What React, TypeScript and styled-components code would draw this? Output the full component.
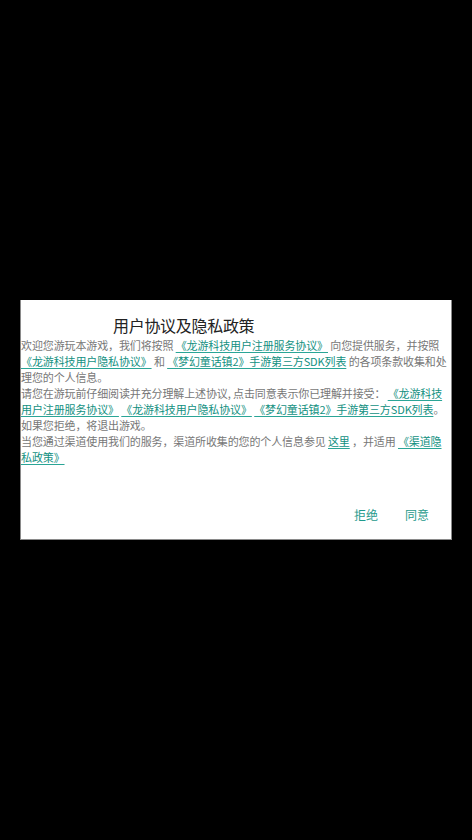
import React from "react";
import styled, { createGlobalStyle } from "styled-components";

const Global = createGlobalStyle`
  html, body { margin: 0; padding: 0; background: #000; }
  body { font-family: "Noto Sans CJK SC", "Noto Sans", sans-serif; }
  * { box-sizing: border-box; }
`;

const Screen = styled.div`
  width: 100vw;
  height: 100vh;
  background: #000;
  display: flex;
  align-items: center;
  justify-content: center;
`;

const Dialog = styled.div`
  width: 432px;
  height: 240px;
  background: #fff;
  border-left: 1px solid #8a8a8a;
  border-right: 1px solid #8a8a8a;
  border-bottom: 1px solid #8a8a8a;
  display: flex;
  flex-direction: column;
`;

const Title = styled.h1`
  margin: 13px 0 0 92px;
  font-size: 16px;
  line-height: 24px;
  font-weight: 400;
  letter-spacing: -0.3px;
  color: #222;
`;

const Body = styled.div`
  flex: 1;
  font-size: 11px;
  line-height: 16px;
  letter-spacing: -0.12px;
  color: #777;
`;

const Para = styled.p`
  margin: 0;
`;

const Link = styled.span`
  color: #12907f;
  text-decoration: underline;
  text-decoration-color: #2aa596;
  text-underline-offset: 2px;
  text-decoration-thickness: 1px;
`;

const Footer = styled.div`
  display: flex;
  justify-content: flex-end;
  gap: 27px;
  padding: 0 22px 14px 0;
`;

const Button = styled.button`
  border: none;
  background: none;
  padding: 0;
  font-family: inherit;
  font-size: 12px;
  line-height: 20px;
  color: #1f9a8c;
`;

export default function App() {
  return (
    <>
      <Global />
      <Screen>
        <Dialog>
          <Title>用户协议及隐私政策</Title>
          <Body>
            <Para>
              欢迎您游玩本游戏，我们将按照 <Link>《龙游科技用户注册服务协议》</Link> 向您提供服务，并按照{" "}
              <Link>《龙游科技用户隐私协议》</Link> 和 <Link>《梦幻童话镇2》手游第三方SDK列表</Link> 的各项条款收集和处理您的个人信息。
            </Para>
            <Para>
              请您在游玩前仔细阅读并充分理解上述协议, 点击同意表示你已理解并接受：{" "}
              <Link>《龙游科技用户注册服务协议》</Link> <Link>《龙游科技用户隐私协议》</Link>{" "}
              <Link>《梦幻童话镇2》手游第三方SDK列表</Link>。
            </Para>
            <Para>如果您拒绝，将退出游戏。</Para>
            <Para>
              当您通过渠道使用我们的服务，渠道所收集的您的个人信息参见 <Link>这里</Link> ，并适用{" "}
              <Link>《渠道隐私政策》</Link>
            </Para>
          </Body>
          <Footer>
            <Button>拒绝</Button>
            <Button>同意</Button>
          </Footer>
        </Dialog>
      </Screen>
    </>
  );
}
